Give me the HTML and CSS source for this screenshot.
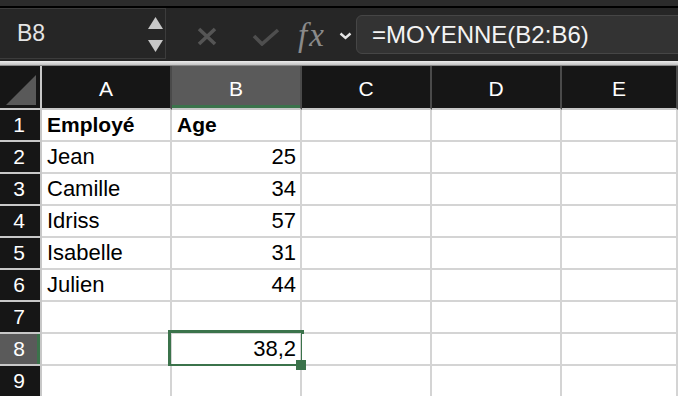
FILE: index.html
```html
<!DOCTYPE html>
<html>
<head>
  <title>Classeur - Moyenne</title>
  <link rel="stylesheet" href="styles.css">
</head>
<body>

  <div class="topstrip"></div>

  <div class="toolbar">
    <div class="namebox">
      <span class="ref">B8</span>
      <span class="spin">
        <svg width="15" height="12" viewBox="0 0 15 12"><polygon points="7.5,0 15,12 0,12" fill="#c8c8c8"/></svg>
        <svg width="15" height="12" viewBox="0 0 15 12"><polygon points="0,0 15,0 7.5,12" fill="#c8c8c8"/></svg>
      </span>
    </div>
    <span class="icon cancel">
      <svg width="20" height="19" viewBox="0 0 20 19"><path d="M2 2 L18 17 M18 2 L2 17" stroke="#555" stroke-width="3.6" fill="none"/></svg>
    </span>
    <span class="icon enter">
      <svg width="28" height="18" viewBox="0 0 28 18"><polyline points="2,8 10,16 26,2" stroke="#4e4e4e" stroke-width="3.6" fill="none"/></svg>
    </span>
    <span class="fx">fx</span>
    <svg class="chevron" width="13" height="8" viewBox="0 0 13 8"><polyline points="1.5,1.5 6.5,6 11.5,1.5" stroke="#e6e6e6" stroke-width="2.4" fill="none"/></svg>
    <div class="formula">=MOYENNE(B2:B6)</div>
  </div>

  <div class="divider"></div>

  <div class="sheet">
    <div class="corner"><span class="tri"></span></div>
    <div class="colhead">A</div>
    <div class="colhead active">B</div>
    <div class="colhead">C</div>
    <div class="colhead">D</div>
    <div class="colhead">E</div>

    <div class="rowhead">1</div>
    <div class="cell bold">Employé</div>
    <div class="cell bold">Age</div>
    <div class="cell"></div><div class="cell"></div><div class="cell"></div>

    <div class="rowhead">2</div>
    <div class="cell">Jean</div>
    <div class="cell num">25</div>
    <div class="cell"></div><div class="cell"></div><div class="cell"></div>

    <div class="rowhead">3</div>
    <div class="cell">Camille</div>
    <div class="cell num">34</div>
    <div class="cell"></div><div class="cell"></div><div class="cell"></div>

    <div class="rowhead">4</div>
    <div class="cell">Idriss</div>
    <div class="cell num">57</div>
    <div class="cell"></div><div class="cell"></div><div class="cell"></div>

    <div class="rowhead">5</div>
    <div class="cell">Isabelle</div>
    <div class="cell num">31</div>
    <div class="cell"></div><div class="cell"></div><div class="cell"></div>

    <div class="rowhead">6</div>
    <div class="cell">Julien</div>
    <div class="cell num">44</div>
    <div class="cell"></div><div class="cell"></div><div class="cell"></div>

    <div class="rowhead">7</div>
    <div class="cell"></div><div class="cell"></div>
    <div class="cell"></div><div class="cell"></div><div class="cell"></div>

    <div class="rowhead active">8</div>
    <div class="cell"></div>
    <div class="cell num selected">38,2<span class="handle"></span></div>
    <div class="cell"></div><div class="cell"></div><div class="cell"></div>

    <div class="rowhead">9</div>
    <div class="cell"></div><div class="cell"></div>
    <div class="cell"></div><div class="cell"></div><div class="cell"></div>
  </div>

</body>
</html>
```

FILE: styles.css
```css
body {
  margin: 0;
  width: 678px;
  height: 396px;
  overflow: hidden;
  background-color: #161616;
  font-family: "Liberation Sans", Arial, sans-serif;
}

/* Barre du haut */
.topstrip {
  height: 6px;
  background-color: #2b2b2b;
  border-bottom: 2px solid #000;
}

.toolbar {
  display: flex;
  align-items: center;
  height: 53px;
  background-color: #262626;
}

.namebox {
  display: flex;
  align-items: center;
  justify-content: space-between;
  align-self: flex-start;
  box-sizing: border-box;
  width: 166px;
  height: 51px;
  padding: 0 2px 0 17px;
  border: 1px solid #3c3c3c;
  border-left: none;
}

.namebox .ref {
  color: #e4e4e4;
  font-size: 23px;
}

.namebox .spin {
  display: flex;
  flex-direction: column;
  gap: 11px;
  margin-top: 2px;
}

.namebox .spin svg {
  display: block;
}

.icon svg {
  display: block;
}

.cancel {
  margin: 4px 0 0 31px;
}

.enter {
  margin: 4px 0 0 35px;
}

.fx {
  width: 30px;
  margin: 2px 0 0 18px;
  font-family: "Liberation Serif", serif;
  font-style: italic;
  font-size: 33px;
  color: #8a8a8a;
  letter-spacing: 2px;
  white-space: nowrap;
}

.chevron {
  margin: 3px 0 0 11px;
}

.formula {
  flex: 1;
  box-sizing: border-box;
  height: 39px;
  margin: 0 -6px 0 4px;
  padding-left: 15px;
  line-height: 37px;
  background-color: #333333;
  border: 1px solid #464646;
  border-radius: 6px;
  color: #f4f4f4;
  font-size: 24px;
}

.divider {
  height: 4px;
  background: linear-gradient(#ececec, #c2c2c2);
  border-bottom: 1px solid #8a8a8a;
}

/* Grille */
.sheet {
  display: grid;
  grid-template-columns: 42px 130px 130px 130px 130px 1fr;
  grid-template-rows: 44px;
  grid-auto-rows: 32px;
}

.corner,
.colhead {
  position: relative;
  display: flex;
  align-items: center;
  justify-content: center;
  background-color: #161616;
  border-bottom: 2px solid #c8c8c8;
  color: #fff;
  font-size: 21px;
  padding-top: 3px;
}

.corner {
  border-right: 2px solid #c8c8c8;
}

.corner .tri {
  position: absolute;
  left: 6px;
  bottom: 3px;
  width: 30px;
  height: 30px;
  background-color: #595959;
  clip-path: polygon(100% 0, 100% 100%, 0 100%);
}

.colhead {
  border-right: 2px solid #4a4a4a;
}

.colhead.active {
  background-color: #5a5a5a;
  box-shadow: inset 0 -3px 0 #3b734b;
}

.rowhead {
  display: flex;
  align-items: center;
  justify-content: center;
  padding-right: 2px;
  background-color: #161616;
  border-right: 2px solid #c8c8c8;
  border-bottom: 2px solid #c8c8c8;
  color: #fff;
  font-size: 21px;
}

.rowhead.active {
  background-color: #5a5a5a;
  box-shadow: inset -3px 0 0 #3b734b;
}

.cell {
  position: relative;
  display: flex;
  align-items: center;
  padding: 0 5px;
  background-color: #fff;
  border-right: 2px solid #d4d4d4;
  border-bottom: 2px solid #d4d4d4;
  color: #000;
  font-size: 22px;
  white-space: nowrap;
}

.cell.bold {
  font-weight: bold;
  font-size: 21px;
}

.cell.num {
  justify-content: flex-end;
  padding-right: 4px;
}

/* Cellule active */
.cell.selected::after {
  content: "";
  position: absolute;
  left: -4px;
  top: -4px;
  right: -4px;
  bottom: -3px;
  border: 3px solid #3b734b;
}

.cell .handle {
  position: absolute;
  right: -6px;
  bottom: -6px;
  width: 10px;
  height: 10px;
  background-color: #3b734b;
  z-index: 1;
}
```
